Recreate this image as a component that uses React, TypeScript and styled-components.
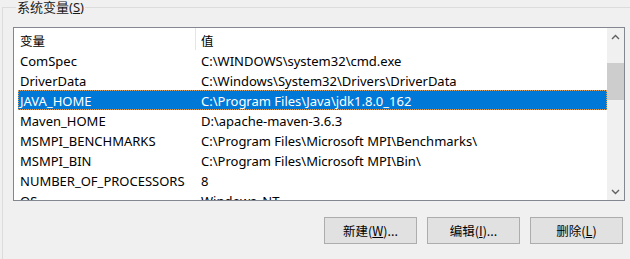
import React from "react";
import styled, { createGlobalStyle } from "styled-components";

const GlobalStyle = createGlobalStyle`
  body {
    margin: 0;
    background: #f0f0f0;
    font-family: "Noto Sans", "Noto Sans CJK SC", sans-serif;
    font-size: 12px;
    color: #000000;
  }
`;

const Window = styled.div`
  width: 630px;
  height: 259px;
  overflow: hidden;
  background: #f0f0f0;
`;

const GroupBox = styled.fieldset`
  margin: 0 0 0 2px;
  padding: 12px 0 0 10px;
  width: 640px;
  height: 300px;
  border: 1px solid #dcdcdc;
  box-sizing: border-box;
`;

const GroupLegend = styled.legend`
  margin-left: 3px;
  padding: 0 1px;
  font-size: 13px;
  line-height: 15px;
  color: #1a1a1a;
`;

const Mnemonic = styled.span`
  text-decoration: underline;
  text-underline-offset: 1px;
`;

const ListBox = styled.div`
  width: 612px;
  height: 174px;
  box-sizing: border-box;
  border: 1px solid #828790;
  display: grid;
  grid-template-columns: 1fr 17px;
  background: #ffffff;
`;

const ListArea = styled.div`
  overflow: hidden;
  display: flex;
  flex-direction: column;
`;

const HeaderRow = styled.div`
  display: grid;
  grid-template-columns: 182px 1fr;
  height: 22px;
  flex: none;
`;

const HeaderCell = styled.div<{ $divider?: boolean }>`
  display: flex;
  align-items: center;
  padding-top: 2px;
  padding-left: ${(p) => (p.$divider ? "6px" : "5px")};
  border-right: ${(p) => (p.$divider ? "1px solid #e5e5e5" : "none")};
  font-family: "Noto Sans CJK SC", sans-serif;
  font-size: 12.5px;
`;

const Row = styled.div<{ $selected?: boolean }>`
  display: grid;
  grid-template-columns: 178px 1fr;
  height: 20px;
  flex: none;
  margin-left: 4px;
  box-sizing: border-box;
  background: ${(p) => (p.$selected ? "#0078d7" : "transparent")};
  color: ${(p) => (p.$selected ? "#ffffff" : "#000000")};
  border: 1px dotted ${(p) => (p.$selected ? "#d9a066" : "transparent")};
`;

const Cell = styled.div<{ $first?: boolean }>`
  display: flex;
  align-items: center;
  padding-top: 2px;
  padding-left: ${(p) => (p.$first ? "1px" : "4px")};
  white-space: nowrap;
  overflow: hidden;
  font-size: 13px;
`;

const ScrollBar = styled.div`
  display: flex;
  flex-direction: column;
  background: #f0f0f0;
`;

const ArrowButton = styled.div`
  height: 17px;
  display: flex;
  align-items: center;
  justify-content: center;
  flex: none;
`;

const Track = styled.div`
  flex: 1;
  display: flex;
  flex-direction: column;
`;

const Thumb = styled.div<{ $offset: number; $size: number }>`
  margin-top: ${(p) => p.$offset}px;
  height: ${(p) => p.$size}px;
  flex: none;
  background: #cdcdcd;
`;

const ButtonRow = styled.div`
  width: 612px;
  display: flex;
  justify-content: flex-end;
  gap: 10px;
  padding-right: 2px;
  box-sizing: border-box;
  margin-top: 16px;
`;

const DialogButton = styled.button`
  width: 93px;
  height: 27px;
  box-sizing: border-box;
  border: 1px solid #adadad;
  background: #e1e1e1;
  font-family: "Noto Sans CJK SC", sans-serif;
  font-size: 12.5px;
  color: #000000;
  padding: 0;
`;

const Chevron = ({ up }: { up?: boolean }) => (
  <svg width="9" height="6" viewBox="0 0 9 6">
    <path
      d={up ? "M1 5 L4.5 1.5 L8 5" : "M1 1 L4.5 4.5 L8 1"}
      fill="none"
      stroke="#606060"
      strokeWidth="1.4"
    />
  </svg>
);

const variables = [
  ["ComSpec", "C:\\WINDOWS\\system32\\cmd.exe"],
  ["DriverData", "C:\\Windows\\System32\\Drivers\\DriverData"],
  ["JAVA_HOME", "C:\\Program Files\\Java\\jdk1.8.0_162"],
  ["Maven_HOME", "D:\\apache-maven-3.6.3"],
  ["MSMPI_BENCHMARKS", "C:\\Program Files\\Microsoft MPI\\Benchmarks\\"],
  ["MSMPI_BIN", "C:\\Program Files\\Microsoft MPI\\Bin\\"],
  ["NUMBER_OF_PROCESSORS", "8"],
  ["OS", "Windows_NT"],
];

export default function App() {
  return (
    <Window>
      <GlobalStyle />
      <GroupBox>
        <GroupLegend>
          系统变量(<Mnemonic>S</Mnemonic>)
        </GroupLegend>
        <ListBox>
          <ListArea>
            <HeaderRow>
              <HeaderCell $divider>变量</HeaderCell>
              <HeaderCell>值</HeaderCell>
            </HeaderRow>
            {variables.map(([name, value]) => (
              <Row key={name} $selected={name === "JAVA_HOME"}>
                <Cell $first>{name}</Cell>
                <Cell>{value}</Cell>
              </Row>
            ))}
          </ListArea>
          <ScrollBar>
            <ArrowButton>
              <Chevron up />
            </ArrowButton>
            <Track>
              <Thumb $offset={18} $size={37} />
            </Track>
            <ArrowButton>
              <Chevron />
            </ArrowButton>
          </ScrollBar>
        </ListBox>
        <ButtonRow>
          <DialogButton>
            新建(<Mnemonic>W</Mnemonic>)...
          </DialogButton>
          <DialogButton>
            编辑(<Mnemonic>I</Mnemonic>)...
          </DialogButton>
          <DialogButton>
            删除(<Mnemonic>L</Mnemonic>)
          </DialogButton>
        </ButtonRow>
      </GroupBox>
    </Window>
  );
}
